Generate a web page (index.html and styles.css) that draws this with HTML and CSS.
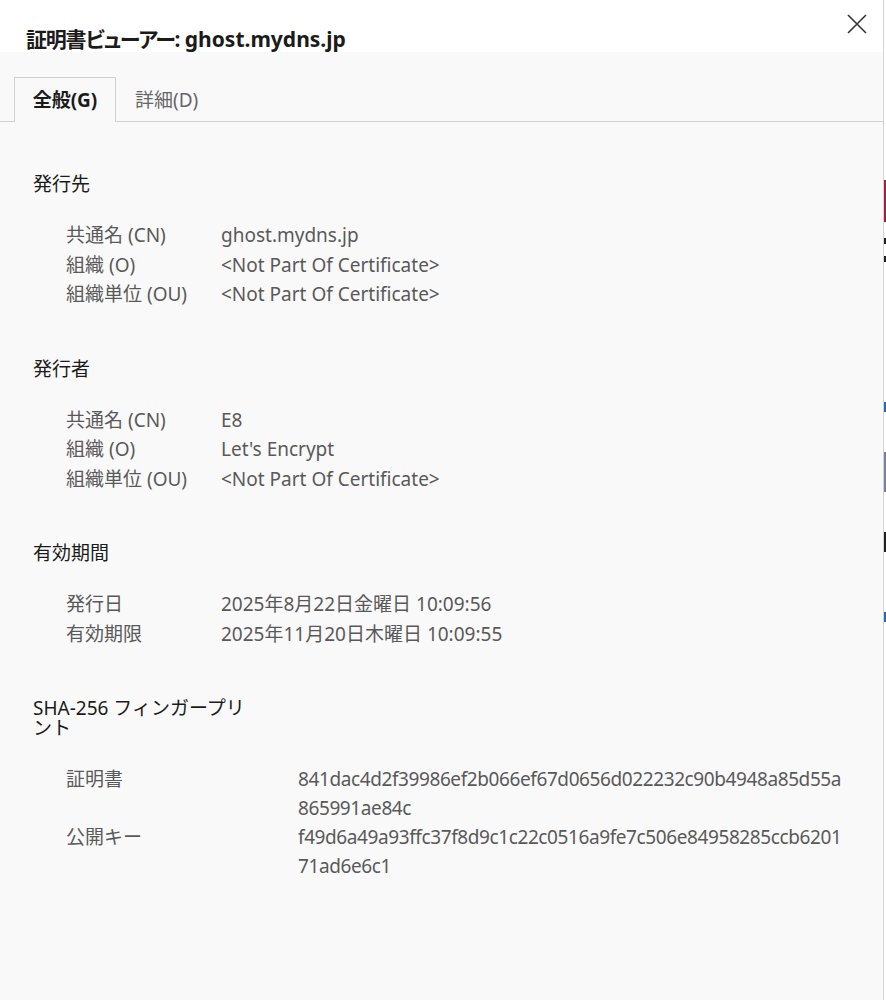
FILE: index.html
```html
<!DOCTYPE html>
<html lang="ja">
<head>
<meta charset="utf-8">
<title>証明書ビューアー</title>
<link rel="stylesheet" href="styles.css">
</head>
<body>
<div class="screen">
  <div class="dialog">
    <header class="header">
      <h1 class="title"><span class="title-jp">証明書ビューアー:</span> ghost.mydns.jp</h1>
      <button class="close" aria-label="閉じる">
        <svg width="20" height="20" viewBox="0 0 20 20"><path d="M1 1 L19 19 M19 1 L1 19" stroke="#333" stroke-width="1.6" fill="none"/></svg>
      </button>
    </header>
    <nav class="tabs">
      <div class="tab active">全般(G)</div>
      <div class="tab">詳細(D)</div>
    </nav>
    <main class="content">
      <section class="section">
        <h2 class="heading">発行先</h2>
        <div class="grid">
          <div class="label">共通名 (CN)</div><div class="value">ghost.mydns.jp</div>
          <div class="label">組織 (O)</div><div class="value">&lt;Not Part Of Certificate&gt;</div>
          <div class="label">組織単位 (OU)</div><div class="value">&lt;Not Part Of Certificate&gt;</div>
        </div>
      </section>
      <section class="section">
        <h2 class="heading">発行者</h2>
        <div class="grid">
          <div class="label">共通名 (CN)</div><div class="value">E8</div>
          <div class="label">組織 (O)</div><div class="value">Let's Encrypt</div>
          <div class="label">組織単位 (OU)</div><div class="value">&lt;Not Part Of Certificate&gt;</div>
        </div>
      </section>
      <section class="section">
        <h2 class="heading">有効期間</h2>
        <div class="grid">
          <div class="label">発行日</div><div class="value">2025年8月22日金曜日 10:09:56</div>
          <div class="label">有効期限</div><div class="value">2025年11月20日木曜日 10:09:55</div>
        </div>
      </section>
      <section class="section">
        <h2 class="heading narrow">SHA-256 フィンガープリント</h2>
        <div class="grid wide">
          <div class="label">証明書</div><div class="value hash">841dac4d2f39986ef2b066ef67d0656d022232c90b4948a85d55a865991ae84c</div>
          <div class="label">公開キー</div><div class="value hash">f49d6a49a93ffc37f8d9c1c22c0516a9fe7c506e84958285ccb620171ad6e6c1</div>
        </div>
      </section>
    </main>
  </div>
  <div class="behind">
    <span class="bit b1"></span>
    <span class="bit b2"></span>
    <span class="bit b3"></span>
    <span class="bit b4"></span>
    <span class="bit b5"></span>
    <span class="bit b6"></span>
    <span class="bit b7"></span>
  </div>
</div>
</body>
</html>
```

FILE: styles.css
```css
html, body {
  margin: 0;
  padding: 0;
  background: #f9f9f9;
}
body {
  font-family: "Noto Sans", "Noto Sans CJK JP", sans-serif;
  color: #1b1b1b;
}
.screen {
  display: flex;
  width: 886px;
  height: 1000px;
  overflow: hidden;
}
.dialog {
  width: 883px;
  border-right: 1px solid #d4d4d4;
  background: #f9f9f9;
  display: flex;
  flex-direction: column;
}
.header {
  height: 52px;
  background: #ffffff;
  display: flex;
  align-items: flex-start;
  justify-content: space-between;
  padding-left: 26px;
  padding-right: 16px;
}
.title {
  margin: 25px 0 0 0;
  font-size: 21px;
  line-height: 28px;
  font-weight: 700;
  color: #1b1b1b;
  font-feature-settings: "palt";
}
.title-jp {
  letter-spacing: -1.2px;
}
.close {
  margin-top: 14px;
  width: 20px;
  height: 20px;
  padding: 0;
  border: 0;
  background: transparent;
  display: flex;
}
.tabs {
  display: flex;
  padding-top: 25px;
  padding-left: 14px;
  border-bottom: 1px solid #d0d0d0;
  height: 44px;
  align-items: stretch;
}
.tab {
  padding: 0 18px;
  font-size: 19px;
  line-height: 44px;
  color: #666666;
  border: 1px solid transparent;
  border-bottom: 0;
}
.tab.active {
  width: 102px;
  box-sizing: border-box;
  text-align: center;
  padding: 0;
  font-weight: 700;
  color: #1b1b1b;
  border-color: #d0d0d0;
  background: #f9f9f9;
  margin-bottom: -1px;
}
.content {
  padding: 52px 0 0 33px;
}
.section + .section {
  margin-top: 49px;
}
.heading {
  margin: 0 0 27px 0;
  font-size: 19px;
  font-weight: 400;
  line-height: 20px;
  color: #1b1b1b;
}
.heading.narrow {
  width: 222px;
  margin-top: 10px;
  margin-bottom: 27px;
}
.grid {
  display: grid;
  grid-template-columns: 155px 1fr;
  padding-left: 33px;
  font-size: 19px;
  line-height: 29.5px;
  color: #595959;
}
.grid.wide {
  grid-template-columns: 232px 550px;
  line-height: 29px;
}
.hash {
  word-break: break-all;
  letter-spacing: -0.4px;
}
.behind {
  width: 2px;
  display: flex;
  flex-direction: column;
  background: #ffffff;
}
.bit {
  display: block;
  width: 2px;
}
.b1 { margin-top: 180px; height: 42px; background: #a0204a; }
.b2 { margin-top: 16px; height: 6px; background: #222; }
.b3 { margin-top: 12px; height: 6px; background: #222; }
.b4 { margin-top: 140px; height: 10px; background: #2a6ab0; }
.b5 { margin-top: 40px; height: 40px; background: #7a80a0; }
.b6 { margin-top: 40px; height: 20px; background: #222; }
.b7 { margin-top: 60px; height: 10px; background: #2a6ab0; }
```
